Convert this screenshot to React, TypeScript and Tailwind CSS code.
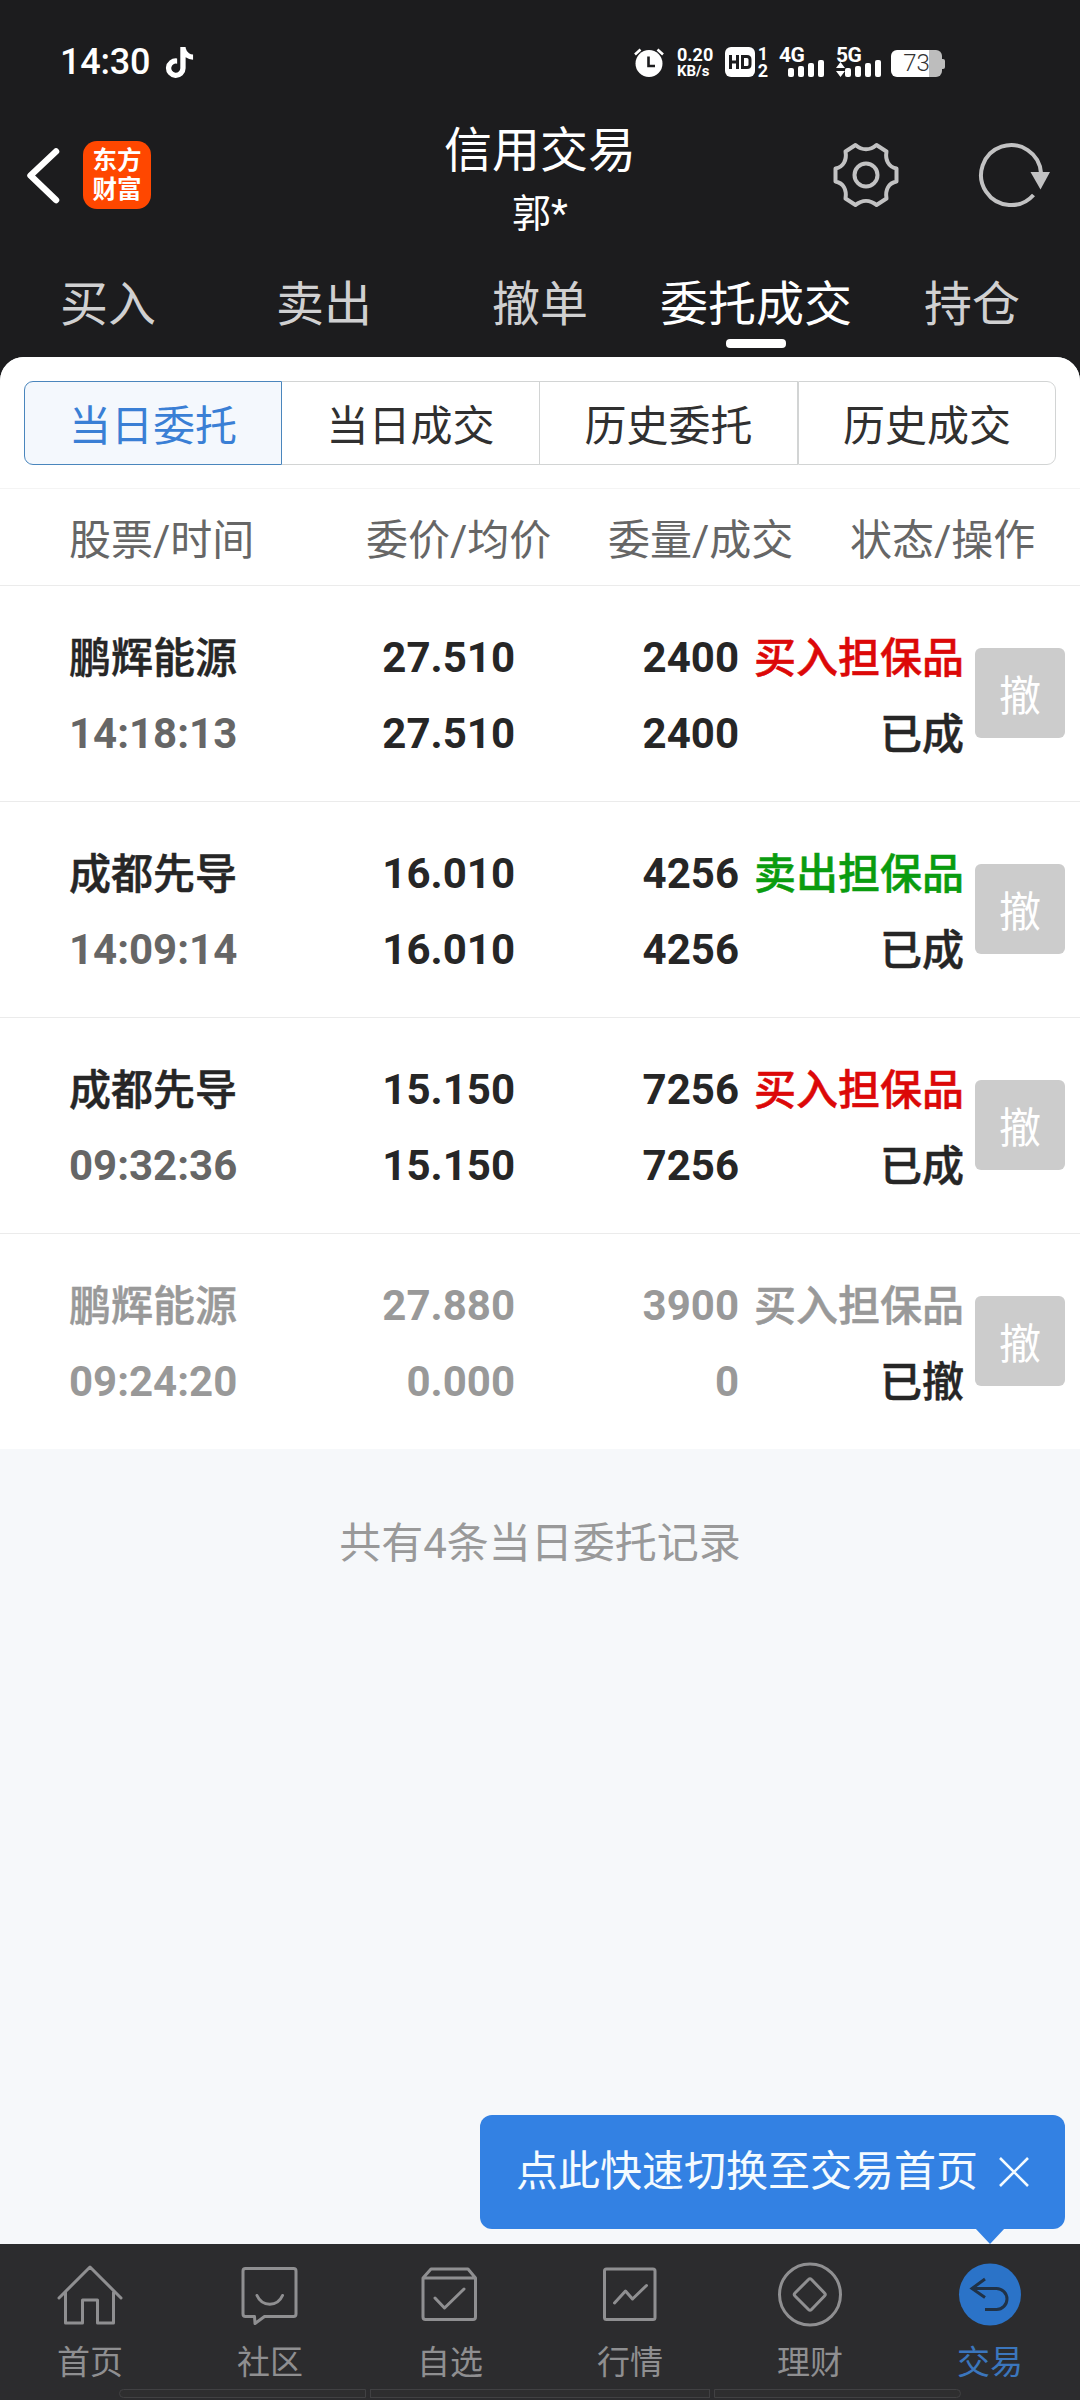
import type { ReactNode } from "react";
import { FaTiktok } from "react-icons/fa6";

type Order = {
  name: string;
  time: string;
  price: string;
  avg: string;
  qty: string;
  filled: string;
  side: "buy" | "sell" | "void";
  action: string;
  status: string;
};

const orders: Order[] = [
  { name: "鹏辉能源", time: "14:18:13", price: "27.510", avg: "27.510", qty: "2400", filled: "2400", side: "buy", action: "买入担保品", status: "已成" },
  { name: "成都先导", time: "14:09:14", price: "16.010", avg: "16.010", qty: "4256", filled: "4256", side: "sell", action: "卖出担保品", status: "已成" },
  { name: "成都先导", time: "09:32:36", price: "15.150", avg: "15.150", qty: "7256", filled: "7256", side: "buy", action: "买入担保品", status: "已成" },
  { name: "鹏辉能源", time: "09:24:20", price: "27.880", avg: "0.000", qty: "3900", filled: "0", side: "void", action: "买入担保品", status: "已撤" },
];

const actionColor = {
  buy: "text-[#dc0808]",
  sell: "text-[#0a9c0f]",
  void: "text-[#999999]",
};

function SignalBars() {
  return (
    <div className="flex h-[17px] items-end gap-[4px]">
      <i className="h-[9px] w-[6px] rounded-[2px] bg-white" />
      <i className="h-[11px] w-[6px] rounded-[2px] bg-white" />
      <i className="h-[14px] w-[6px] rounded-[2px] bg-white" />
      <i className="h-[17px] w-[6px] rounded-[2px] bg-white" />
    </div>
  );
}

function StatusBar() {
  return (
    <div className="flex h-[114px] items-start pl-[60px] pr-[135px] pt-[47px] text-white">
      <span className="mt-[-1px] text-[36px] font-medium leading-[32px] tracking-[-0.2px]">14:30</span>
      <FaTiktok className="ml-[15px] h-[31px] w-[29px]" />
      <div className="ml-auto flex h-[30px] items-start">
        <svg className="mt-[1px] h-[29px] w-[30px]" viewBox="0 0 30 29" fill="none">
          <circle cx="15" cy="15.5" r="13.5" fill="#fff" />
          <path d="M1 6.5 6.5 1.5M29 6.5 23.500 1.500" stroke="#fff" strokeWidth="2.600" />
          <path d="M14.500 8.500v9.500h6.500" stroke="#1c1c1e" strokeWidth="2.600" />
        </svg>
        <div className="ml-[13px] w-[36px] font-bold">
          <div className="text-[18px] leading-[16px]">0.20</div>
          <div className="mt-[1px] text-[15px] leading-[15px]">KB/s</div>
        </div>
        <div className="ml-[12px] flex h-[30px] w-[30px] items-center justify-center rounded-[6px] bg-white">
          <svg className="h-[14px] w-[23px]" viewBox="0 0 23 14" fill="none" stroke="#1c1c1e" strokeWidth="3">
            <path d="M1.500 0v14M8.500 0v14M1.500 7h7M13.500 1.500h4.500q3 0 3 3v5q0 3-3 3h-4.500z" />
          </svg>
        </div>
        <div className="ml-[2px] w-[12px] text-center text-[18px] font-bold leading-[13px]">
          <div>1</div>
          <div className="mt-[4px]">2</div>
        </div>
        <div className="ml-[9px] w-[47px] pl-[1px]">
          <div className="pt-[1px] text-[21px] font-bold leading-[14px] tracking-[-0.5px]">4G</div>
          <div className="ml-[9px] mt-[-2px]"><SignalBars /></div>
        </div>
        <div className="ml-[10px] w-[47px] pl-[1px]">
          <div className="pt-[1px] text-[21px] font-bold leading-[14px] tracking-[-0.5px]">5G</div>
          <div className="mt-[-2px] flex items-end">
            <svg className="h-[15px] w-[9px]" viewBox="0 0 9 15" fill="#fff"><path d="M4.500 0 9 6H0zM4.500 15 9 9H0z" /></svg>
            <SignalBars />
          </div>
        </div>
        <div className="ml-[9px] mt-[3px] flex items-center">
          <div className="flex h-[27px] w-[51px] items-center justify-center rounded-[6px] bg-[linear-gradient(to_right,#fff_75%,#bdbdbd_75%)] text-[24px] font-light leading-[27px] text-[#333]">73</div>
          <div className="h-[10px] w-[3px] rounded-r-[2px] bg-[#bdbdbd]" />
        </div>
      </div>
    </div>
  );
}

function Header() {
  return (
    <header className="grid h-[138px] grid-cols-[1fr_auto_1fr] text-white">
      <div className="flex pl-[24px] pt-[27px]">
        <svg className="mt-[6px] h-[58px] w-[38px]" viewBox="0 0 38 58" fill="none" stroke="#fff" strokeWidth="6.500" strokeLinecap="round" strokeLinejoin="round">
          <path d="M32 4.500 6.500 28.500 32 53" />
        </svg>
        <div className="ml-[21px] flex h-[68px] w-[68px] flex-col items-center justify-center rounded-[14px] bg-[#ff4700] text-[24.500px] font-bold leading-[29px]">
          <span>东方</span>
          <span>财富</span>
        </div>
      </div>
      <div className="flex flex-col items-center pt-[7px]">
        <h1 className="text-[48px] leading-[60px]">信用交易</h1>
        <div className="mt-[10px] text-[39px] leading-[46px]">郭*</div>
      </div>
      <div className="flex justify-end pr-[26px] pt-[25px]">
        <svg className="h-[72px] w-[72px]" viewBox="0 0 72 72" fill="none" stroke="#c2c2c3" strokeWidth="4" strokeLinejoin="round">
          <path d="M25.500 6C32 11.500 40 11.500 46.500 6L56.500 12.500C55 21 58.500 28 66.500 29.500V42.500C58.500 44 55 51 56.500 59.500L46.500 66C40 60.500 32 60.500 25.500 66L15.500 59.500C17 51 13.500 44 5.500 42.500V29.500C13.500 28 17 21 15.500 12.500Z" />
          <circle cx="36" cy="36" r="11.500" />
        </svg>
        <svg className="ml-[74px] h-[72px] w-[78px]" viewBox="0 0 78 72" fill="none">
          <path d="M65 34A30 30 0 1 0 57.500 56" stroke="#c2c2c3" strokeWidth="4" />
          <path d="M54.500 33H74L64.500 50.500z" fill="#c2c2c3" />
        </svg>
      </div>
    </header>
  );
}

function Tabs() {
  return (
    <nav className="grid h-[105px] grid-cols-5 text-center text-[48px] leading-[105px] text-[#d0d0d1]">
      <span>买入</span>
      <span>卖出</span>
      <span>撤单</span>
      <span className="relative text-white">
        委托成交
        <i className="absolute left-[78px] top-[87px] h-[9px] w-[60px] rounded-[4px] bg-white" />
      </span>
      <span>持仓</span>
    </nav>
  );
}

function OrderRow({ order }: { order: Order }) {
  const dim = order.side === "void";
  const main = dim ? "text-[#999999]" : "text-[#262626]";
  const time = dim ? "text-[#999999]" : "text-[#666666]";
  return (
    <div className="flex h-[216px] items-start border-t border-[#ebebeb] pl-[69px] pt-[34px] text-[42px] font-bold leading-[76px]">
      <div className={"w-[240px] " + main}>
        <div className="relative top-px font-medium [-webkit-text-stroke:0.5px]">{order.name}</div>
        <div className={time}>{order.time}</div>
      </div>
      <div className={"w-[206px] text-right " + main}>
        <div>{order.price}</div>
        <div>{order.avg}</div>
      </div>
      <div className={"w-[224px] text-right " + main}>
        <div>{order.qty}</div>
        <div>{order.filled}</div>
      </div>
      <div className="relative top-px w-[225px] text-right font-medium [-webkit-text-stroke:0.5px]">
        <div className={actionColor[order.side]}>{order.action}</div>
        <div className="text-[#262626]">{order.status}</div>
      </div>
      <button className="ml-[11px] mt-[28px] h-[90px] w-[90px] rounded-[6px] bg-[#cccccc] pt-[7px] font-normal leading-[83px] text-white">撤</button>
    </div>
  );
}

function NavItem({ label, active, children }: { label: string; active?: boolean; children: ReactNode }) {
  return (
    <div className={"flex flex-col items-center pt-[14px] " + (active ? "text-[#3b76bd]" : "text-[#8f8f91]")}>
      <svg className="h-[72px] w-[72px]" viewBox="0 0 72 72" fill="none" stroke="currentColor" strokeWidth="3" strokeLinecap="round" strokeLinejoin="round">
        {children}
      </svg>
      <span className="mt-[13px] text-[33px] leading-[40px]">{label}</span>
    </div>
  );
}

function BottomNav() {
  return (
    <nav className="relative grid h-[156px] grid-cols-6 bg-[#2c2c2e]">
      <NavItem label="首页">
        <path d="M5 40 36 9 67 40M11.500 34.500V65H28.500V42H43.500V65H59.500V34.500" />
      </NavItem>
      <NavItem label="社区">
        <path d="M11.500 10.500H59.500Q62 10.500 62 13V56Q62 58.500 59.500 58.500H30.500L21 65.500 20.500 58.500H11.500Q9 58.500 9 56V13Q9 10.500 11.500 10.500ZM23 37.500C28 49 43.500 49 48.500 37.500" />
      </NavItem>
      <NavItem label="自选">
        <path d="M9 20 17 11H54L61.500 20V59Q61.500 61.500 59 61.500H11.500Q9 61.500 9 59ZM9 20H61.500M21 40 30.500 50 50 31" />
      </NavItem>
      <NavItem label="行情">
        <rect x="10.500" y="11" width="50.500" height="50.500" rx="2" />
        <path d="M20.500 45 31.500 33 38.500 41 52.500 27.500" />
      </NavItem>
      <NavItem label="理财">
        <circle cx="36" cy="36.500" r="30.500" />
        <path d="M34.500 21.500Q36 20 37.500 21.500L50.500 35Q52 36.500 50.500 38L37.500 51.500Q36 53 34.500 51.500L21 38Q19.500 36.500 21 35Z" />
      </NavItem>
      <NavItem label="交易" active>
        <circle cx="36" cy="36.500" r="31" fill="#2b73c8" stroke="none" />
        <path d="M31 21 18 30.500 31 39.500M18 30.500H42.500A10.500 10.500 0 0 1 42.500 51.500H31" stroke="#203247" strokeLinecap="butt" strokeLinejoin="miter" />
      </NavItem>
      <div className="absolute bottom-[2px] left-[119px] flex gap-[4px]">
        <i className="h-[9px] w-[247px] rounded-l-[5px] border border-[#414143] bg-[#2e2e2f]" />
        <i className="h-[9px] w-[340px] border border-[#414143] bg-[#2e2e2f]" />
        <i className="h-[9px] w-[247px] rounded-r-[5px] border border-[#414143] bg-[#2e2e2f]" />
      </div>
    </nav>
  );
}

export default function App() {
  return (
    <div className="flex h-[2400px] w-[1080px] flex-col overflow-hidden bg-[#1c1c1e] font-['Roboto','Noto_Sans_CJK_SC',sans-serif]">
      <StatusBar />
      <Header />
      <Tabs />
      <main className="relative flex-1 overflow-hidden rounded-t-[24px] bg-[#f6f8fa]">
        <div className="bg-white">
          <div className="px-[24px] pb-[23px] pt-[24px]">
            <div className="grid h-[84px] grid-cols-4 text-center text-[42px] leading-[74px] text-[#303030]">
              <span className="rounded-l-[9px] border border-[#4a86bd] bg-[#f4f8fd] pt-[8px] text-[#3a7fd5]">当日委托</span>
              <span className="border-y border-r border-[#d2d4d4] pt-[8px]">当日成交</span>
              <span className="border-y border-r border-[#d2d4d4] pt-[8px]">历史委托</span>
              <span className="rounded-r-[9px] border border-l-1 border-[#d2d4d4] pt-[8px]">历史成交</span>
            </div>
          </div>
          <div className="flex h-[97px] border-t border-[#f4f4f4] pl-[69px] text-[42px] leading-[103px] text-[#666666]">
            <span className="w-[297px]">股票/时间</span>
            <span className="w-[242px]">委价/均价</span>
            <span className="w-[242px]">委量/成交</span>
            <span>状态/操作</span>
          </div>
          {orders.map((o) => (
            <OrderRow key={o.time} order={o} />
          ))}
        </div>
        <p className="mt-[66px] text-center text-[42px] leading-[58px] text-[#999999]">共有4条当日委托记录</p>
        <div className="absolute bottom-[15px] right-[15px] flex h-[114px] w-[585px] items-center rounded-[12px] bg-[#3381e3] pl-[36px] text-[42px] text-[#f4fbff]">
          <span className="leading-[110px]">点此快速切换至交易首页</span>
          <svg className="ml-[20px] h-[32px] w-[32px]" viewBox="0 0 32 32" fill="none" stroke="#f4fbff" strokeWidth="2.600">
            <path d="M2 2 30 30M30 2 2 30" />
          </svg>
          <svg className="absolute right-[60px] top-[113px] h-[16px] w-[30px]" viewBox="0 0 30 16" fill="#3381e3">
            <path d="M0 0H30L15 16z" />
          </svg>
        </div>
      </main>
      <BottomNav />
    </div>
  );
}
